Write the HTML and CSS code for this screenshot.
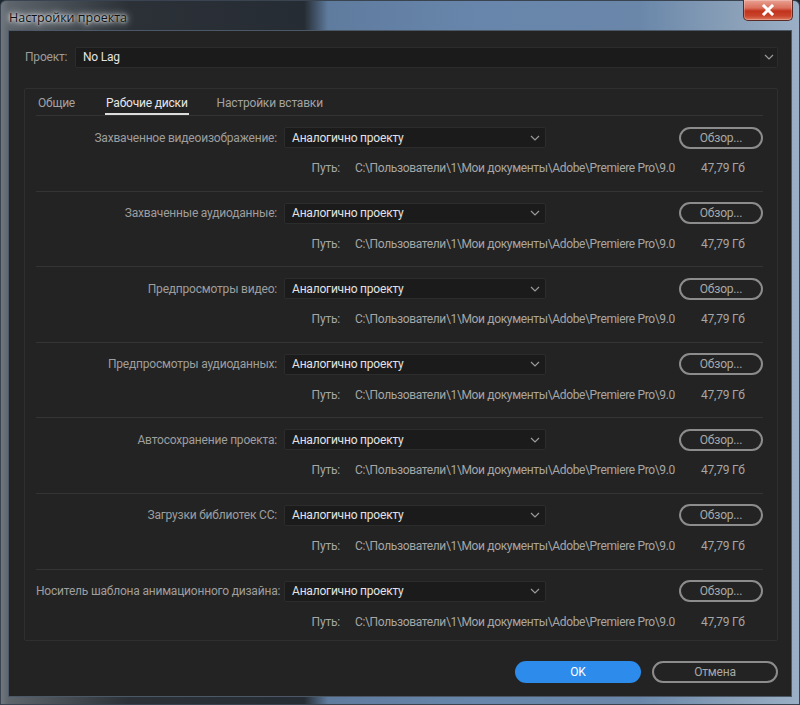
FILE: index.html
```html
<!DOCTYPE html>
<html lang="ru">
<head>
<meta charset="utf-8">
<title>Настройки проекта</title>
<link rel="stylesheet" href="styles.css">
</head>
<body>
<div class="window">
  <div class="titlebar">
    <span class="title">Настройки проекта</span>
    <span class="close"><svg width="16" height="12" viewBox="0 0 16 12"><path d="M4 2 L12 10 M12 2 L4 10" stroke="#fff" stroke-width="3" stroke-linecap="square"/></svg></span>
  </div>
  <div class="client">
    <div class="project-row">
      <span class="project-label">Проект:</span>
      <div class="select project-select">
        <span>No Lag</span>
        <span class="chev-box"><svg class="chev" width="10" height="6" viewBox="0 0 10 6"><path d="M1 1 L5 5 L9 1" fill="none" stroke="#9a9a9a" stroke-width="1.2"/></svg></span>
      </div>
    </div>
    <div class="panel">
      <div class="tabs">
        <span class="tab">Общие</span>
        <span class="tab active">Рабочие диски</span>
        <span class="tab">Настройки вставки</span>
      </div>
      <div class="rows">
        <div class="row">
          <div class="line">
            <span class="label">Захваченное видеоизображение:</span>
            <div class="select"><span>Аналогично проекту</span><svg class="chev" width="10" height="6" viewBox="0 0 10 6"><path d="M1 1 L5 5 L9 1" fill="none" stroke="#9a9a9a" stroke-width="1.2"/></svg></div>
            <span class="browse">Обзор...</span>
          </div>
          <div class="path-line"><span class="path-label">Путь:</span><span class="path">C:\Пользователи\1\Мои документы\Adobe\Premiere Pro\9.0</span><span class="size">47,79 Гб</span></div>
        </div>
        <div class="row">
          <div class="line">
            <span class="label">Захваченные аудиоданные:</span>
            <div class="select"><span>Аналогично проекту</span><svg class="chev" width="10" height="6" viewBox="0 0 10 6"><path d="M1 1 L5 5 L9 1" fill="none" stroke="#9a9a9a" stroke-width="1.2"/></svg></div>
            <span class="browse">Обзор...</span>
          </div>
          <div class="path-line"><span class="path-label">Путь:</span><span class="path">C:\Пользователи\1\Мои документы\Adobe\Premiere Pro\9.0</span><span class="size">47,79 Гб</span></div>
        </div>
        <div class="row">
          <div class="line">
            <span class="label">Предпросмотры видео:</span>
            <div class="select"><span>Аналогично проекту</span><svg class="chev" width="10" height="6" viewBox="0 0 10 6"><path d="M1 1 L5 5 L9 1" fill="none" stroke="#9a9a9a" stroke-width="1.2"/></svg></div>
            <span class="browse">Обзор...</span>
          </div>
          <div class="path-line"><span class="path-label">Путь:</span><span class="path">C:\Пользователи\1\Мои документы\Adobe\Premiere Pro\9.0</span><span class="size">47,79 Гб</span></div>
        </div>
        <div class="row">
          <div class="line">
            <span class="label">Предпросмотры аудиоданных:</span>
            <div class="select"><span>Аналогично проекту</span><svg class="chev" width="10" height="6" viewBox="0 0 10 6"><path d="M1 1 L5 5 L9 1" fill="none" stroke="#9a9a9a" stroke-width="1.2"/></svg></div>
            <span class="browse">Обзор...</span>
          </div>
          <div class="path-line"><span class="path-label">Путь:</span><span class="path">C:\Пользователи\1\Мои документы\Adobe\Premiere Pro\9.0</span><span class="size">47,79 Гб</span></div>
        </div>
        <div class="row">
          <div class="line">
            <span class="label">Автосохранение проекта:</span>
            <div class="select"><span>Аналогично проекту</span><svg class="chev" width="10" height="6" viewBox="0 0 10 6"><path d="M1 1 L5 5 L9 1" fill="none" stroke="#9a9a9a" stroke-width="1.2"/></svg></div>
            <span class="browse">Обзор...</span>
          </div>
          <div class="path-line"><span class="path-label">Путь:</span><span class="path">C:\Пользователи\1\Мои документы\Adobe\Premiere Pro\9.0</span><span class="size">47,79 Гб</span></div>
        </div>
        <div class="row">
          <div class="line">
            <span class="label">Загрузки библиотек CC:</span>
            <div class="select"><span>Аналогично проекту</span><svg class="chev" width="10" height="6" viewBox="0 0 10 6"><path d="M1 1 L5 5 L9 1" fill="none" stroke="#9a9a9a" stroke-width="1.2"/></svg></div>
            <span class="browse">Обзор...</span>
          </div>
          <div class="path-line"><span class="path-label">Путь:</span><span class="path">C:\Пользователи\1\Мои документы\Adobe\Premiere Pro\9.0</span><span class="size">47,79 Гб</span></div>
        </div>
        <div class="row">
          <div class="line">
            <span class="label">Носитель шаблона анимационного дизайна:</span>
            <div class="select"><span>Аналогично проекту</span><svg class="chev" width="10" height="6" viewBox="0 0 10 6"><path d="M1 1 L5 5 L9 1" fill="none" stroke="#9a9a9a" stroke-width="1.2"/></svg></div>
            <span class="browse">Обзор...</span>
          </div>
          <div class="path-line"><span class="path-label">Путь:</span><span class="path">C:\Пользователи\1\Мои документы\Adobe\Premiere Pro\9.0</span><span class="size">47,79 Гб</span></div>
        </div>
      </div>
    </div>
    <div class="buttons">
      <span class="btn ok">OK</span>
      <span class="btn cancel">Отмена</span>
    </div>
  </div>
</div>
</body>
</html>
```
FILE: styles.css
```css
* { box-sizing: border-box; }
html, body { margin: 0; padding: 0; }
body {
  width: 800px;
  height: 705px;
  overflow: hidden;
  background: #1e2630;
  font-family: Roboto, "Noto Sans", sans-serif;
  font-size: 12px;
  letter-spacing: -0.2px;
}
.window {
  width: 800px;
  height: 705px;
  display: flex;
  flex-direction: column;
  background:
    linear-gradient(90deg, #6f767d 0%, #5d646b 1%, #2b3137 16%, #262c33 38%, #5f7c9f 41%, #6886ab 60%, #6a87aa 80%, #8aa0b8 92%, #9bb0c6 100%);
  border: 1px solid #3a4450;
  border-radius: 6px 6px 0 0;
  padding: 0 7px 7px 7px;
  position: relative;
}
.titlebar {
  height: 29px;
  display: flex;
  align-items: center;
  position: relative;
}
.title {
  font-family: "Open Sans", "Noto Sans", sans-serif;
  font-size: 12.5px;
  letter-spacing: 0;
  color: #111;
  text-shadow: 0 0 6px #e8ecef, 0 0 10px #d8dde2, 0 0 3px #fff;
  padding-left: 1px;
  margin-top: 3px;
}
.close {
  position: absolute;
  right: -1px;
  top: -1px;
  width: 50px;
  height: 21px;
  border: 1px solid #5a2a24;
  border-top: none;
  border-radius: 0 0 5px 5px;
  background: linear-gradient(180deg, #e9a193 0%, #d9705c 40%, #c2321c 55%, #c8442c 80%, #e07a5f 100%);
  display: flex;
  align-items: center;
  justify-content: center;
  box-shadow: inset 0 0 0 1px rgba(255,255,255,0.25);
}
.client {
  flex: 1;
  background: #232323;
  border: 1px solid #4d5866;
  display: flex;
  flex-direction: column;
  padding: 15px 13px 0 15px;
}
.project-row {
  display: flex;
  align-items: center;
  height: 22px;
}
.project-label {
  color: #9c9c9c;
  padding-left: 1px;
  width: 51px;
}
.select {
  display: flex;
  align-items: center;
  justify-content: space-between;
  height: 21px;
  background: #1b1b1b;
  border: 1px solid #2c2c2c;
  border-radius: 2px;
  color: #e2e2e2;
  padding: 0 5px 0 7px;
}
.project-select {
  flex: 1;
  padding-right: 0;
}
.chev-box {
  width: 17px;
  height: 19px;
  display: flex;
  align-items: center;
  justify-content: center;
  background: #1f1f1f;
}
.chev { display: block; }
.panel {
  margin-top: 20px;
  height: 553px;
  border: 1px solid #2f2f2f;
  border-radius: 2px;
  padding: 0 14px 0 11px;
  display: flex;
  flex-direction: column;
}
.tabs {
  display: flex;
  height: 28px;
  padding-left: 2px;
  padding-top: 6px;
}
.tab {
  color: #a2a2a2;
  height: 20px;
  line-height: 16px;
  margin-right: 30px;
  border-bottom: 2px solid transparent;
}
.tab.active {
  color: #e6e6e6;
  border-bottom-color: #dcdcdc;
  padding: 0 1px;
  margin-right: 28px;
}
.rows { display: flex; flex-direction: column; }
.row {
  height: 75.6px;
  border-top: 1px solid #343434;
  padding-top: 11px;
}
.line {
  display: flex;
  align-items: center;
  height: 21px;
}
.label {
  width: 241px;
  flex-shrink: 0;
  text-align: right;
  color: #9e9e9e;
  white-space: nowrap;
}
.line .select {
  margin-left: 7px;
  width: 262px;
  flex-shrink: 0;
}
.browse {
  margin-left: auto;
  width: 84px;
  flex-shrink: 0;
  height: 22px;
  border: 2px solid #8c8c8c;
  border-radius: 11px;
  display: flex;
  align-items: center;
  justify-content: center;
  color: #a8a8a8;
}
.path-line {
  display: flex;
  align-items: center;
  height: 20px;
  margin-top: 10px;
  color: #a6a6a6;
  white-space: nowrap;
}
.path-label {
  width: 304px;
  text-align: right;
}
.path {
  margin-left: 15px;
  width: 346px;
  letter-spacing: -0.35px;
}
.buttons {
  display: flex;
  justify-content: flex-end;
  gap: 11px;
  margin-top: 20px;
}
.btn {
  width: 126px;
  height: 22px;
  border-radius: 11px;
  display: flex;
  align-items: center;
  justify-content: center;
}
.ok {
  background: #2d8ceb;
  color: #ffffff;
}
.cancel {
  border: 2px solid #8c8c8c;
  color: #a8a8a8;
}
```
